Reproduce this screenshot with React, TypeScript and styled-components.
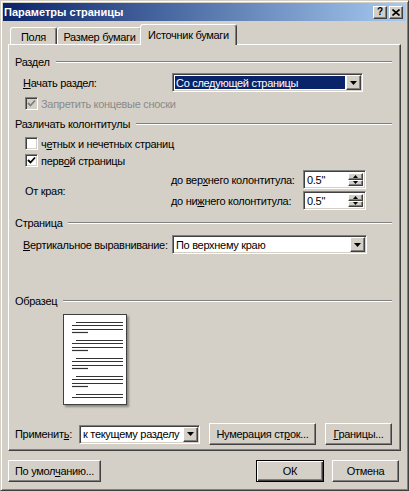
import React from 'react';
import styled, { createGlobalStyle, css } from 'styled-components';

const face = '#d4d0c8';
const shade = '#808080';
const dark = '#404040';
const navy = '#0a246a';

const GlobalStyle = createGlobalStyle`
  html, body {
    margin: 0;
    padding: 0;
    background: ${face};
  }
  body {
    font-family: 'Liberation Sans', Arial, sans-serif;
    font-size: 11px;
    letter-spacing: -0.3px;
    color: #000;
  }
  * {
    box-sizing: border-box;
  }
  u {
    text-underline-offset: 1px;
  }
`;

const raised = css`
  border: 1px solid;
  border-color: #fff ${dark} ${dark} #fff;
  box-shadow: inset -1px -1px ${shade}, inset 1px 1px ${face};
  background: ${face};
`;

const sunken = css`
  border: 1px solid;
  border-color: ${shade} #fff #fff ${shade};
  box-shadow: inset 1px 1px ${dark}, inset -1px -1px ${face};
`;

const Window = styled.div`
  width: 409px;
  height: 491px;
  background: ${face};
  border: 1px solid;
  border-color: ${face} ${dark} ${dark} ${face};
  box-shadow: inset 1px 1px #fff, inset -1px -1px ${shade};
  padding: 2px;
  display: flex;
  flex-direction: column;
`;

const TitleBar = styled.div`
  height: 18px;
  display: flex;
  align-items: center;
  padding: 0 3px 0 1px;
  background: linear-gradient(to right, ${navy}, #a6caf0);
`;

const TitleText = styled.div`
  flex: 1;
  color: #fff;
  font-weight: bold;
  font-size: 11px;
  letter-spacing: 0;
`;

const CaptionButtons = styled.div`
  display: flex;
  gap: 2px;
`;

const CaptionButton = styled.div`
  ${raised};
  width: 14px;
  height: 13px;
  display: flex;
  align-items: center;
  justify-content: center;
  font-weight: bold;
  font-size: 10px;
  line-height: 1;
`;

const Body = styled.div`
  padding: 0 5px;
  display: flex;
  flex-direction: column;
`;

const TabStrip = styled.div`
  margin-top: 3px;
  height: 20px;
  display: flex;
  align-items: flex-end;
  padding-left: 2px;
  position: relative;
  z-index: 1;
`;

const Tab = styled.div<{ $w: number; $active?: boolean }>`
  position: relative;
  width: ${(p) => p.$w}px;
  height: 17px;
  border: 1px solid;
  border-bottom: none;
  border-color: #fff ${dark} transparent #fff;
  border-radius: 3px 3px 0 0;
  box-shadow: inset -1px 0 ${shade};
  background: ${face};
  display: flex;
  align-items: center;
  justify-content: center;
  padding-top: 2px;
  white-space: nowrap;
  ${(p) =>
    p.$active &&
    css`
      height: 21px;
      margin: 0 -2px -1px;
      width: ${p.$w + 4}px;
      z-index: 2;
      padding-top: 0;
    `}
`;

const Panel = styled.div`
  height: 407px;
  border: 1px solid;
  border-color: #fff ${dark} ${dark} #fff;
  box-shadow: inset -1px -1px ${shade};
  padding: 10px 8px 5px 6px;
  display: flex;
  flex-direction: column;
`;

const GroupHeader = styled.div<{ $mt?: number }>`
  height: 14px;
  margin-top: ${(p) => p.$mt ?? 0}px;
  display: flex;
  align-items: center;
`;

const Rule = styled.div`
  flex: 1;
  height: 2px;
  margin-left: 6px;
  border-top: 1px solid ${shade};
  border-bottom: 1px solid #fff;
`;

const Row = styled.div<{ $mt?: number; $h?: number }>`
  height: ${(p) => p.$h ?? 19}px;
  margin-top: ${(p) => p.$mt ?? 0}px;
  display: flex;
  align-items: center;
`;

const FieldLabel = styled.div<{ $w: number; $pl?: number }>`
  width: ${(p) => p.$w}px;
  padding-left: ${(p) => p.$pl ?? 0}px;
  white-space: nowrap;
`;

const Combo = styled.div<{ $w: number }>`
  ${sunken};
  width: ${(p) => p.$w}px;
  height: 19px;
  background: #fff;
  display: flex;
  padding: 1px;
`;

const ComboText = styled.div<{ $selected?: boolean }>`
  flex: 1;
  display: flex;
  align-items: center;
  padding-left: 1px;
  margin: 1px;
  white-space: nowrap;
  overflow: hidden;
  ${(p) =>
    p.$selected &&
    css`
      background: ${navy};
      color: #fff;
    `}
`;

const DropButton = styled.div`
  ${raised};
  width: 15px;
  height: 100%;
  display: flex;
  align-items: center;
  justify-content: center;
`;

const CheckRow = styled.div<{ $mt?: number }>`
  height: 13px;
  margin-top: ${(p) => p.$mt ?? 0}px;
  padding-left: 10px;
  display: flex;
  align-items: center;
  gap: 3px;
`;

const CheckBox = styled.div<{ $disabled?: boolean }>`
  ${sunken};
  width: 13px;
  height: 13px;
  background: ${(p) => (p.$disabled ? face : '#fff')};
  display: flex;
  align-items: center;
  justify-content: center;
`;

const CheckText = styled.span<{ $disabled?: boolean }>`
  color: ${(p) => (p.$disabled ? '#8a8a8a' : '#000')};
  white-space: nowrap;
`;

const MarginGrid = styled.div`
  margin-top: 3px;
  display: grid;
  grid-template-columns: 156px 132px 63px;
  grid-template-rows: 19px 19px;
  row-gap: 2px;
  align-items: center;
`;

const EdgeLabel = styled.div`
  grid-row: 1 / span 2;
  padding-left: 10px;
  padding-top: 1px;
`;

const SpinBox = styled.div`
  ${sunken};
  height: 19px;
  background: #fff;
  display: flex;
  padding: 2px;
`;

const SpinText = styled.div`
  flex: 1;
  display: flex;
  align-items: center;
  padding-left: 1px;
`;

const SpinButtons = styled.div`
  width: 15px;
  display: flex;
  flex-direction: column;
`;

const SpinButton = styled.div`
  ${raised};
  flex: 1;
  display: flex;
  align-items: center;
  justify-content: center;
`;

const PreviewPage = styled.div`
  margin: 6px 0 0 48px;
  width: 64px;
  height: 91px;
  background: #fff;
  border: 1px solid ${dark};
  box-shadow: 2px 2px 2px rgba(0, 0, 0, 0.35);
`;

const ApplyRow = styled.div`
  margin-top: auto;
  height: 22px;
  display: flex;
  align-items: center;
`;

const Button = styled.button<{ $w: number; $ml?: number; $default?: boolean }>`
  ${raised};
  width: ${(p) => p.$w}px;
  height: 22px;
  margin-left: ${(p) => p.$ml ?? 0}px;
  padding: 0;
  font: inherit;
  letter-spacing: inherit;
  color: #000;
  white-space: nowrap;
  ${(p) =>
    p.$default &&
    css`
      border: 1px solid #000;
      box-shadow: inset 1px 1px #fff, inset -1px -1px ${dark}, inset -2px -2px ${shade};
    `}
`;

const Footer = styled.div`
  margin-top: 9px;
  padding: 0 7px 0 5px;
  display: flex;
`;

const Spacer = styled.div`
  flex: 1;
`;

const DownArrow = () => (
  <svg width="7" height="4" viewBox="0 0 7 4">
    <polygon points="0,0 7,0 3.5,4" fill="#000" />
  </svg>
);

const SmallArrow = ({ up }: { up?: boolean }) => (
  <svg width="5" height="3" viewBox="0 0 5 3">
    <polygon points={up ? '0,3 5,3 2.5,0' : '0,0 5,0 2.5,3'} fill="#000" />
  </svg>
);

const Check = ({ color = '#000' }: { color?: string }) => (
  <svg width="9" height="9" viewBox="0 0 9 9">
    <polyline points="1,4 3.5,6.5 8,1.5" fill="none" stroke={color} strokeWidth="1.8" />
  </svg>
);

const ComboBox = ({ w, text, selected }: { w: number; text: string; selected?: boolean }) => (
  <Combo $w={w}>
    <ComboText $selected={selected}>{text}</ComboText>
    <DropButton>
      <DownArrow />
    </DropButton>
  </Combo>
);

const Spinner = ({ value }: { value: string }) => (
  <SpinBox>
    <SpinText>{value}</SpinText>
    <SpinButtons>
      <SpinButton>
        <SmallArrow up />
      </SpinButton>
      <SpinButton>
        <SmallArrow />
      </SpinButton>
    </SpinButtons>
  </SpinBox>
);

// text lines of the sample page: groups of four, the first one indented
const PageLines = () => {
  const offsets = [0, 3, 7, 10];
  const lines: React.ReactNode[] = [];
  for (let g = 0; g < 5; g++) {
    const top = 7.5 + g * 18;
    const count = g === 4 ? 2 : 4;
    for (let i = 0; i < count; i++) {
      const y = top + offsets[i];
      const x1 = i === 0 ? 12 : 8;
      const x2 = i === 3 ? 24 : 59;
      lines.push(<line key={`${g}-${i}`} x1={x1} x2={x2} y1={y} y2={y} stroke="#333" strokeWidth="1.2" />);
    }
  }
  return (
    <svg width="62" height="89" viewBox="0 0 62 89">
      {lines}
    </svg>
  );
};

export default function App() {
  return (
    <>
      <GlobalStyle />
      <Window>
        <TitleBar>
          <TitleText>Параметры страницы</TitleText>
          <CaptionButtons>
            <CaptionButton>?</CaptionButton>
            <CaptionButton>
              <svg width="8" height="7" viewBox="0 0 8 7">
                <path d="M0.5 0.5 L7.5 6.5 M7.5 0.5 L0.5 6.5" stroke="#000" strokeWidth="1.6" />
              </svg>
            </CaptionButton>
          </CaptionButtons>
        </TitleBar>

        <Body>
          <TabStrip>
            <Tab $w={47}>Поля</Tab>
            <Tab $w={85}>Размер бумаги</Tab>
            <Tab $w={93} $active>
              Источник бумаги
            </Tab>
          </TabStrip>

          <Panel>
            <GroupHeader>
              Раздел
              <Rule />
            </GroupHeader>
            <Row $mt={4}>
              <FieldLabel $w={157} $pl={8}>
                <u>Н</u>ачать раздел:
              </FieldLabel>
              <ComboBox w={191} text="Со следующей страницы" selected />
            </Row>
            <CheckRow $mt={5}>
              <CheckBox $disabled>
                <Check color={shade} />
              </CheckBox>
              <CheckText $disabled>Запретить концевые сноски</CheckText>
            </CheckRow>

            <GroupHeader $mt={7}>
              Различать колонтитулы
              <Rule />
            </GroupHeader>
            <CheckRow $mt={6}>
              <CheckBox />
              <CheckText>
                ч<u>е</u>тных и нечетных страниц
              </CheckText>
            </CheckRow>
            <CheckRow $mt={4}>
              <CheckBox>
                <Check />
              </CheckBox>
              <CheckText>
                перв<u>о</u>й страницы
              </CheckText>
            </CheckRow>
            <MarginGrid>
              <EdgeLabel>От края:</EdgeLabel>
              <FieldLabel $w={132}>
                до вер<u>х</u>него колонтитула:
              </FieldLabel>
              <Spinner value={'0.5"'} />
              <FieldLabel $w={132}>
                до ни<u>ж</u>него колонтитула:
              </FieldLabel>
              <Spinner value={'0.5"'} />
            </MarginGrid>

            <GroupHeader $mt={6}>
              Страница
              <Rule />
            </GroupHeader>
            <Row $mt={5}>
              <FieldLabel $w={157} $pl={8}>
                <u>В</u>ертикальное выравнивание:
              </FieldLabel>
              <ComboBox w={195} text="По верхнему краю" />
            </Row>

            <GroupHeader $mt={40}>
              Образец
              <Rule />
            </GroupHeader>
            <PreviewPage>
              <PageLines />
            </PreviewPage>

            <ApplyRow>
              <FieldLabel $w={64}>
                Применит<u>ь</u>:
              </FieldLabel>
              <ComboBox w={121} text="к текущему разделу" />
              <Button $w={107} $ml={9}>
                Нумерация ст<u>р</u>ок...
              </Button>
              <Button $w={67} $ml={9}>
                <u>Г</u>раницы...
              </Button>
            </ApplyRow>
          </Panel>
        </Body>

        <Footer>
          <Button $w={93}>
            По умол<u>ч</u>анию...
          </Button>
          <Spacer />
          <Button $w={68} $default>
            ОК
          </Button>
          <Button $w={67} $ml={8}>
            Отмена
          </Button>
        </Footer>
      </Window>
    </>
  );
}
